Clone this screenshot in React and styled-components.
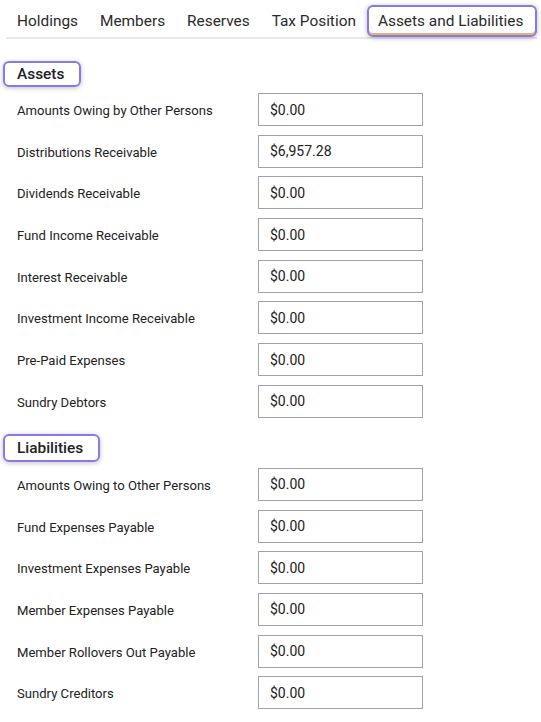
import React from "react";
import styled, { createGlobalStyle } from "styled-components";

const Global = createGlobalStyle`
  html, body { margin: 0; padding: 0; background: #fff; }
  body { font-family: Roboto, "Liberation Sans", Arial, sans-serif; color: #222; }
`;

const Page = styled.div`
  width: 541px;
  padding: 0 4px 0 0;
  box-sizing: border-box;
`;

const TabBar = styled.div`
  display: flex;
  align-items: flex-end;
  margin-left: 6px;
  padding-top: 5px;
  border-bottom: 2px solid #e9e9e9;
`;

const Tab = styled.div`
  height: 32px;
  display: flex;
  align-items: center;
  box-sizing: border-box;
  padding: 0 ${(p) => (p.$active ? "9px" : "11px")};
  font-size: 15.4px;
  color: #2a2a2a;
  white-space: nowrap;
  ${(p) =>
    p.$active &&
    `
    padding-right: 12px;
    border: 2px solid #8b78e3;
    border-radius: 6px;
    box-shadow: 0 1px 5px rgba(0,0,0,0.28), inset 0 -2px 0 #e6b070;
  `}
`;

const Section = styled.section`
  display: flex;
  flex-direction: column;
  margin-top: ${(p) => p.$top}px;
`;

const Heading = styled.h2`
  align-self: flex-start;
  margin: 0 0 6px 3px;
  height: ${(p) => p.$h}px;
  box-sizing: border-box;
  display: flex;
  align-items: center;
  padding: 0 15px 0 12px;
  border: 2px solid #8b78e3;
  border-radius: 6px;
  box-shadow: 0 1px 5px rgba(0,0,0,0.25);
  font-size: 15.4px;
  font-weight: 500;
  color: #222;
`;

const Rows = styled.div`
  display: flex;
  flex-direction: column;
  gap: 8.7px;
`;

const Row = styled.div`
  display: flex;
  align-items: center;
  height: 33px;
`;

const Label = styled.div`
  width: 241px;
  padding-left: 17px;
  font-size: 13.1px;
  color: #222;
  padding-top: 2px;
`;

const Field = styled.div`
  width: 165px;
  height: 33px;
  box-sizing: border-box;
  border: 1.5px solid #a3a3a3;
  padding-left: 11px;
  display: flex;
  align-items: center;
  font-size: 14px;
  color: #222;
`;

const tabs = ["Holdings", "Members", "Reserves", "Tax Position", "Assets and Liabilities"];

const assets = [
  ["Amounts Owing by Other Persons", "$0.00"],
  ["Distributions Receivable", "$6,957.28"],
  ["Dividends Receivable", "$0.00"],
  ["Fund Income Receivable", "$0.00"],
  ["Interest Receivable", "$0.00"],
  ["Investment Income Receivable", "$0.00"],
  ["Pre-Paid Expenses", "$0.00"],
  ["Sundry Debtors", "$0.00"],
];

const liabilities = [
  ["Amounts Owing to Other Persons", "$0.00"],
  ["Fund Expenses Payable", "$0.00"],
  ["Investment Expenses Payable", "$0.00"],
  ["Member Expenses Payable", "$0.00"],
  ["Member Rollovers Out Payable", "$0.00"],
  ["Sundry Creditors", "$0.00"],
];

function Block({ title, items, top, h }) {
  return (
    <Section $top={top}>
      <Heading $h={h}>{title}</Heading>
      <Rows>
        {items.map(([l, v]) => (
          <Row key={l}>
            <Label>{l}</Label>
            <Field>{v}</Field>
          </Row>
        ))}
      </Rows>
    </Section>
  );
}

export default function App() {
  return (
    <Page>
      <Global />
      <TabBar>
        {tabs.map((t, i) => (
          <Tab key={t} $active={i === tabs.length - 1}>
            {t}
          </Tab>
        ))}
      </TabBar>
      <Block title="Assets" items={assets} top={22} h={26} />
      <Block title="Liabilities" items={liabilities} top={16} h={28} />
    </Page>
  );
}
